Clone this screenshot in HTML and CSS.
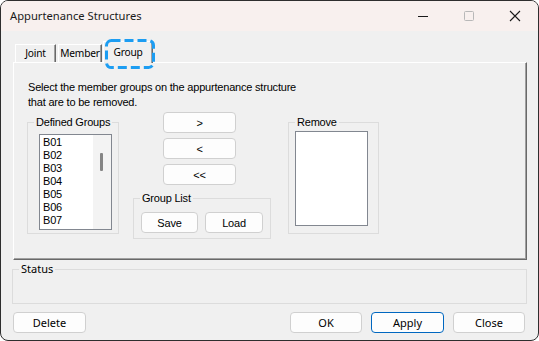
FILE: index.html
```html
<!DOCTYPE html>
<html>
<head>
<meta charset="utf-8">
<link rel="stylesheet" href="styles.css">
</head>
<body>
<div class="window">
  <div class="titlebar">
    <div class="title">Appurtenance Structures</div>
    <div class="caption-buttons">
      <div class="cap-btn"><svg width="12" height="12" viewBox="0 0 12 12"><path d="M1 6.5h10" stroke="#1a1a1a" stroke-width="1"/></svg></div>
      <div class="cap-btn"><svg width="12" height="12" viewBox="0 0 12 12"><rect x="1.5" y="1.5" width="9" height="9" rx="1" fill="none" stroke="#b8b8b8" stroke-width="1"/></svg></div>
      <div class="cap-btn"><svg width="12" height="12" viewBox="0 0 12 12"><path d="M1 1L11 11M11 1L1 11" stroke="#1a1a1a" stroke-width="1.1"/></svg></div>
    </div>
  </div>
  <div class="client">
    <div class="tabs">
      <div class="tab joint">Joint</div>
      <div class="tab member">Member</div>
      <div class="tab selected">Group
        <svg class="focus-ring" width="50" height="30" viewBox="0 0 50 30"><rect x="1.5" y="1.5" width="47" height="27" rx="5" fill="none" stroke="#1c9df2" stroke-width="3" stroke-dasharray="9 4"/></svg>
      </div>
    </div>
    <div class="panel">
      <p class="intro">Select the member groups on the appurtenance structure<br>that are to be removed.</p>
      <div class="row">
        <fieldset class="group defined">
          <legend>Defined Groups</legend>
          <div class="listbox">
            <div class="items">
              <div>B01</div><div>B02</div><div>B03</div><div>B04</div><div>B05</div><div>B06</div><div>B07</div>
            </div>
            <div class="scroll"><div class="thumb"></div></div>
          </div>
        </fieldset>
        <div class="middle">
          <div class="move-buttons">
            <button class="btn classic">&gt;</button>
            <button class="btn classic">&lt;</button>
            <button class="btn classic">&lt;&lt;</button>
          </div>
          <fieldset class="group grouplist">
            <legend>Group List</legend>
            <div class="pair">
              <button class="btn classic save">Save</button>
              <button class="btn classic load">Load</button>
            </div>
          </fieldset>
        </div>
        <fieldset class="group remove">
          <legend>Remove</legend>
          <div class="listbox empty"></div>
        </fieldset>
      </div>
    </div>
    <fieldset class="status"><legend>Status</legend></fieldset>
    <div class="footer">
      <button class="btn modern delete">Delete</button>
      <div class="spacer"></div>
      <button class="btn modern ok">OK</button>
      <button class="btn modern default">Apply</button>
      <button class="btn modern close">Close</button>
    </div>
  </div>
</div>
</body>
</html>
```
FILE: styles.css
```css
* { box-sizing: border-box; }
html, body { margin: 0; padding: 0; background: #ffffff; }
body { width: 539px; height: 341px; overflow: hidden; }

.window {
  width: 539px;
  height: 341px;
  border: 1px solid #2e2e2e;
  border-radius: 8px;
  overflow: hidden;
  background: #f0f0f0;
  display: flex;
  flex-direction: column;
  font-family: "Noto Sans", "Liberation Sans", sans-serif;
  font-size: 11px;
  color: #000;
}

.titlebar {
  height: 30px;
  background: #f8f0ee;
  display: flex;
  align-items: center;
  flex: none;
}
.title { padding-left: 9px; flex: 1; line-height: 16px; color: #1a1a1a; font-size: 11.2px; }
.caption-buttons { display: flex; height: 30px; }
.cap-btn { width: 46px; height: 30px; display: flex; align-items: center; justify-content: center; }

.client { padding: 0 11px 0 12px; display: flex; flex-direction: column; }

.tabs {
  margin-top: 10px;
  height: 21px;
  display: flex;
  align-items: flex-end;
  padding-left: 2px;
  font-size: 10.2px;
  letter-spacing: -0.2px;
}
.tab {
  height: 18px;
  padding: 0;
  text-align: center;
  line-height: 16px;
  border-top: 1px solid #ffffff;
  border-left: 1px solid #ffffff;
  border-right: 1px solid #696969;
  box-shadow: inset -1px 0 0 #a0a0a0;
  margin-right: 1px;
  background: #f0f0f0;
  white-space: nowrap;
}
.tab.joint { width: 41px; }
.tab.member { width: 44px; margin-left: 1px; }
.tab.selected {
  height: 22px;
  margin-bottom: -1px;
  margin-left: 0;
  width: 50px;
  padding: 2px 0 0 0;
  position: relative;
  z-index: 1;
}
.focus-ring { position: absolute; left: 1px; top: -3px; }

.panel {
  height: 198px;
  border-top: 1px solid #ffffff;
  border-left: 1px solid #ffffff;
  border-right: 1px solid #696969;
  border-bottom: 1px solid #696969;
  box-shadow: inset -1px -1px 0 #a0a0a0;
  padding: 17px 0 0 14px;
  font-family: "Liberation Sans", Arial, sans-serif;
  font-size: 11px;
  letter-spacing: -0.2px;
}
.intro { margin: 0; line-height: 15px; }

.row { display: flex; align-items: flex-start; margin-top: 2px; }

.group {
  margin: 0;
  padding: 0;
  border: 1px solid #dcdcdc;
  min-width: 0;
}
.group legend {
  margin-left: 6px;
  padding: 0 2px;
  line-height: 13px;
}
.defined { width: 92px; margin: 4px 0 0 -1px; }
.defined .listbox { margin: 5px 6px 3px 11px; height: 96px; }
.listbox {
  width: 73px;
  background: #ffffff;
  border: 1px solid #828790;
  display: flex;
}
.items { flex: 1; padding: 1px 0 0 3px; line-height: 13px; }
.scroll { width: 18px; background: #f3f3f3; position: relative; }
.thumb {
  position: absolute;
  left: 7px;
  top: 18px;
  width: 3px;
  height: 18px;
  border-radius: 1px;
  background: #858585;
}

.middle { margin-left: 14px; width: 138px; }
.move-buttons { display: flex; flex-direction: column; gap: 5px; padding-left: 30px; }
.btn {
  height: 21px;
  background: #fdfdfd;
  border: 1px solid #d0d0d0;
  border-radius: 4px;
  padding: 0;
  color: #000;
}
.btn.classic { font-family: "Liberation Sans", Arial, sans-serif; font-size: 11px; letter-spacing: -0.2px; }
.move-buttons .btn { width: 73px; }
.grouplist { width: 138px; margin-top: 7px; }
.pair { display: flex; gap: 7px; margin: 7px 0 5px 7px; }
.save { width: 57px; }
.load { width: 58px; }

.remove { width: 91px; margin: 4px 0 0 17px; }
.remove .listbox { margin: 2px 10px 7px 6px; height: 95px; }

.status {
  margin: 1px 0 0 -1px;
  padding: 0;
  height: 43px;
  border: 1px solid #dcdcdc;
  min-width: 0;
}
.status legend { margin-left: 6px; padding: 0 2px; line-height: 16px; }

.footer { display: flex; margin-top: 8px; padding-right: 2px; gap: 9px; }
.spacer { flex: 1; }
.btn.modern { width: 72px; font-family: "Noto Sans", "Liberation Sans", sans-serif; font-size: 11px; }
.btn.delete { width: 73px; }
.btn.default { width: 73px; border-color: #0067c0; }
```
